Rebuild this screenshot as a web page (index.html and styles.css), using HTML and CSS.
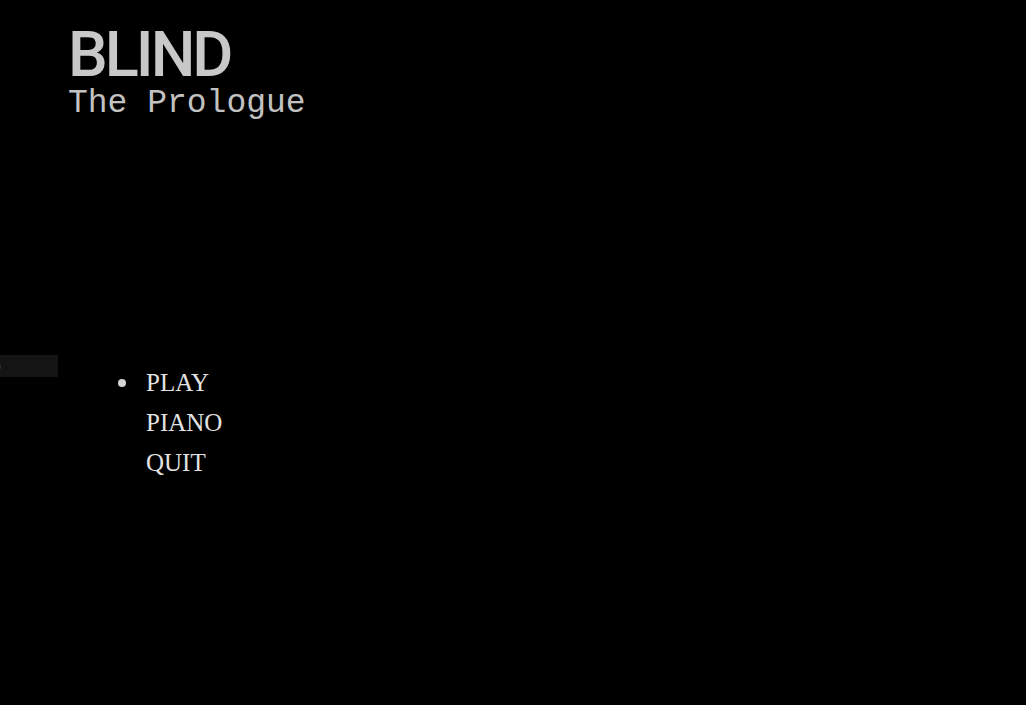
FILE: index.html
```html
<!DOCTYPE html>
<html>
<head>
<meta charset="utf-8">
<link rel="stylesheet" href="styles.css">
</head>
<body>
<div class="screen">
  <header class="title">
    <h1 class="title-main">BLIND</h1>
    <p class="title-sub">The Prologue</p>
  </header>
  <ul class="menu">
    <li class="menu-item active">PLAY</li>
    <li class="menu-item">PIANO</li>
    <li class="menu-item">QUIT</li>
  </ul>
  <div class="debug-box"><span class="debug-text">p</span></div>
</div>
</body>
</html>
```
FILE: styles.css
```css
html, body {
  margin: 0;
  padding: 0;
  background: #000;
  height: 100%;
}
.screen {
  position: relative;
  width: 1026px;
  height: 705px;
  overflow: hidden;
  background: #000;
}
.title {
  padding: 25px 0 0 68px;
}
.title-main {
  margin: 0;
  font-family: Roboto, "Open Sans", sans-serif;
  font-weight: 500;
  font-size: 63px;
  line-height: 60px;
  letter-spacing: -3px;
  color: #c8c8c8;
}
.title-sub {
  margin: 0;
  font-family: "Liberation Mono", monospace;
  font-size: 33px;
  line-height: 38px;
  color: #c2c2c2;
}
.menu {
  margin: 240px 0 0 0;
  padding: 0 0 0 146px;
  list-style: none;
}
.menu-item {
  position: relative;
  font-family: "Liberation Serif", serif;
  font-size: 25px;
  line-height: 40px;
  color: #e2e2e2;
}
.menu-item.active::before {
  content: "";
  position: absolute;
  left: -28px;
  top: 16px;
  width: 8px;
  height: 8px;
  border-radius: 50%;
  background: #d4d4d4;
}
.debug-box {
  position: absolute;
  left: 0;
  top: 355px;
  width: 58px;
  height: 22px;
  background: #141414;
  overflow: hidden;
}
.debug-text {
  display: block;
  margin-left: -5px;
  font-family: "Liberation Sans", sans-serif;
  font-size: 11px;
  line-height: 22px;
  color: #3a3a3a;
}
```
